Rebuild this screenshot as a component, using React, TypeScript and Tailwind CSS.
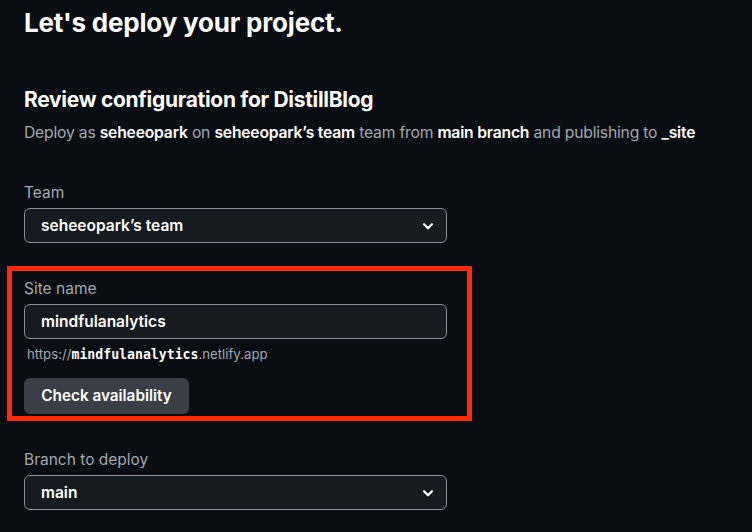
const Chevron = () => (
  <svg width="14" height="14" viewBox="0 0 16 16" fill="none" className="text-white">
    <path d="M3.5 6l4.5 4.5L12.5 6" stroke="currentColor" strokeWidth="2.6" strokeLinecap="round" strokeLinejoin="round" />
  </svg>
);

const SelectBox = ({ value }: { value: string }) => (
  <div className="flex h-[35px] w-[423px] items-center justify-between rounded-md border border-[#8a8f98] bg-[#161a21] pl-[16px] pr-[11px]">
    <span className="text-[15.5px] font-semibold text-white">{value}</span>
    <Chevron />
  </div>
);

const Label = ({ children }: { children: React.ReactNode }) => (
  <div className="text-[15.5px] leading-[22px] text-[#a3a8b0]">{children}</div>
);

const App = () => {
  return (
    <div
      className="min-h-[532px] w-[752px] overflow-hidden bg-[#0a0d14] pl-[24px] pt-[6px]"
      style={{ fontFamily: "Inter, 'Noto Sans', sans-serif" }}
    >
      <h1 className="text-[26px] font-bold leading-[34px] tracking-[-0.2px] text-white">
        Let's deploy your project.
      </h1>

      <h2 className="mt-[46px] text-[21px] font-bold leading-[28px] tracking-[-0.3px] text-white">
        Review configuration for DistillBlog
      </h2>
      <p className="mt-[8px] text-[15.7px] leading-[22px] tracking-[-0.2px] text-[#a3a8b0]">
        Deploy as <span className="font-semibold text-white">seheeopark</span> on{" "}
        <span className="font-semibold text-white">seheeopark’s team</span> team from{" "}
        <span className="font-semibold text-white">main branch</span> and publishing to{" "}
        <span className="font-semibold text-white">_site</span>
      </p>

      <div className="mt-[38px]">
        <Label>Team</Label>
        <div className="mt-[4px]">
          <SelectBox value="seheeopark’s team" />
        </div>
      </div>

      <div className="ml-[-17px] mt-[23px] w-[465px] border-[5px] border-[#ff2a08] pb-[2px] pl-[12px] pt-[7px]">
        <Label>Site name</Label>
        <div className="mt-[4px] flex h-[35px] w-[423px] items-center rounded-md border border-[#8a8f98] bg-[#161a21] pl-[16px]">
          <span className="text-[15.5px] font-semibold text-white">mindfulanalytics</span>
        </div>
        <div className="mt-[6px] pl-[3px] text-[13.2px] leading-[18px] text-[#a3a8b0]">
          https://
          <span
            className="font-bold text-white"
            style={{ fontFamily: "'DejaVu Sans Mono', 'Liberation Mono', monospace" }}
          >
            mindfulanalytics
          </span>
          .netlify.app
        </div>
        <button className="mt-[14px] h-[36px] w-[165px] rounded-md bg-[#3a3f47] text-[15.3px] font-semibold text-white">
          Check availability
        </button>
      </div>

      <div className="mt-[28px]">
        <Label>Branch to deploy</Label>
        <div className="mt-[4px]">
          <SelectBox value="main" />
        </div>
      </div>
    </div>
  );
};

export default App;
